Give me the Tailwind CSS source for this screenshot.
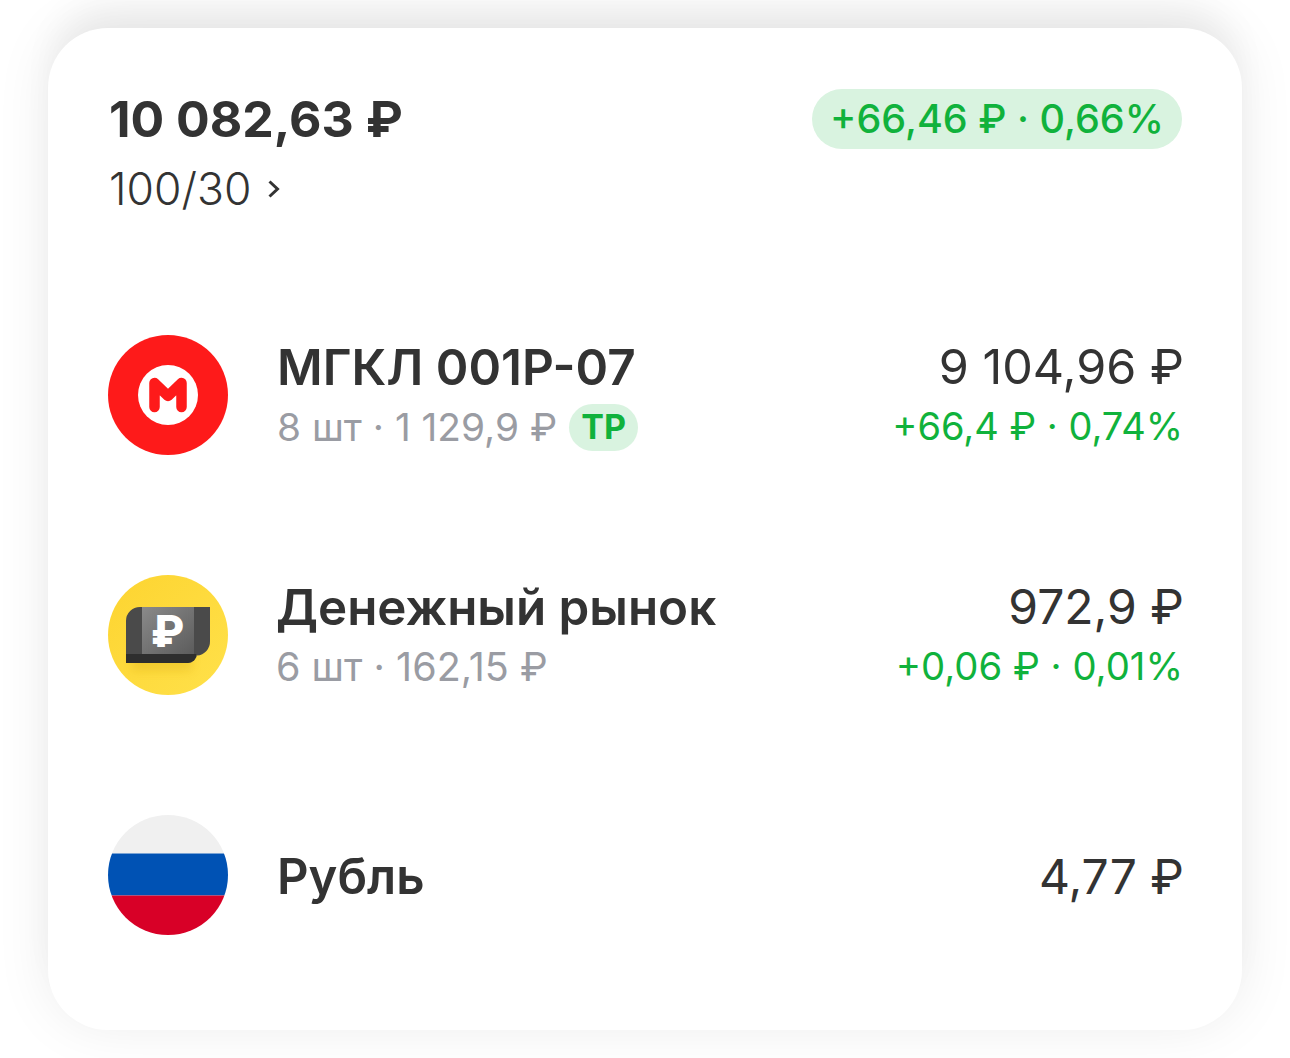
<!DOCTYPE html>
<html lang="ru">
<head>
<meta charset="utf-8">
<title>Портфель</title>
<script src="https://cdn.jsdelivr.net/npm/@tailwindcss/browser@4"></script>
</head>
<body class="h-[1058px] w-[1290px] overflow-hidden bg-white font-['Inter','Liberation_Sans',sans-serif] text-[#333333]">
  <main class="ml-[48px] mt-[28px] h-[1002px] w-[1194px] rounded-[60px] bg-white px-[60px] pt-[61px] shadow-[0_-4px_56px_rgba(0,0,0,0.08),0_-30px_36px_-8px_rgba(0,0,0,0.05)]">
    <!-- Header -->
    <header class="flex items-start justify-between">
      <div>
        <div class="ml-[1px] h-[60px] text-[50px] leading-[60px] font-bold">10 082,63 ₽</div>
        <div class="ml-[1px] mt-[10px] flex h-[60px] items-center gap-[16px] text-[44.500px] leading-[60px] font-light">
          100/30
          <svg class="h-[20px] w-[14px]" viewBox="0 0 14 20" fill="none" stroke="#333333" stroke-width="3"><path d="M2.500 2.500 10.500 10l-8 7.500"/></svg>
        </div>
      </div>
      <div class="flex h-[60px] w-[370px] items-center justify-center rounded-full bg-[#d9f3e0] pt-[2px] text-[39.500px] font-medium text-[#10b23c]">+66,46 ₽ · 0,66%</div>
    </header>

    <!-- Rows -->
    <section class="mt-[116px] flex flex-col gap-[120px]">
      <div class="flex h-[120px] items-center">
        <svg class="h-[120px] w-[120px] shrink-0" viewBox="0 0 120 120">
          <circle cx="60" cy="60" r="60" fill="#fe1a1a"/>
          <circle cx="60" cy="60" r="30" fill="#fff"/>
          <path d="M46.500 72V48L60 61l13.500-13V72" fill="none" stroke="#fe1a1a" stroke-width="10.500" stroke-linecap="round" stroke-linejoin="round"/>
        </svg>
        <div class="ml-[49px] flex-1 pt-[4px]">
          <div class="h-[60px] text-[49.500px] leading-[60px] font-semibold">МГКЛ 001Р-07</div>
          <div class="flex h-[60px] items-center text-[38.800px] leading-[60px] text-[#9a9ca3]">
            8 шт · 1 129,9 ₽
            <span class="ml-[12px] flex h-[47px] w-[69px] items-center justify-center rounded-full bg-[#d9f3e0] text-[34px] font-bold text-[#10b23c]">ТР</span>
          </div>
        </div>
        <div class="-mr-[2px] pt-[2px] text-right">
          <div class="h-[60px] pt-[1px] text-[48.500px] leading-[60px]">9 104,96 ₽</div>
          <div class="h-[60px] pr-[1px] text-[38px] leading-[60px] text-[#10b23c]">+66,4 ₽ · 0,74%</div>
        </div>
      </div>

      <div class="flex h-[120px] items-center">
        <svg class="h-[120px] w-[120px] shrink-0" viewBox="0 0 120 120">
          <defs>
            <linearGradient id="coin" x1="0" y1="0" x2="1" y2="1">
              <stop offset="0" stop-color="#fdd430"/>
              <stop offset="1" stop-color="#ffe14a"/>
            </linearGradient>
            <linearGradient id="plate" x1="0" y1="0" x2="1" y2="1">
              <stop offset="0" stop-color="#8a8a8a"/>
              <stop offset="1" stop-color="#5c5c5c"/>
            </linearGradient>
            <filter id="soft" x="-20%" y="-20%" width="140%" height="150%"><feGaussianBlur stdDeviation="5"/></filter>
            <clipPath id="coinClip"><circle cx="60" cy="60" r="60"/></clipPath>
          </defs>
          <circle cx="60" cy="60" r="60" fill="url(#coin)"/>
          <path clip-path="url(#coinClip)" d="M24 60h60v36H24z" fill="#d9a80f" opacity=".3" filter="url(#soft)"/>
          <path d="M32 32h70v34a14 14 0 0 1-13 14.500V79a9 9 0 0 1-9 9H18V46a14 14 0 0 1 14-14z" fill="#4a4a4a"/>
          <path d="M18 79h70.600a9 9 0 0 1-9 9H18z" fill="#2e2e2e"/>
          <path d="M34 32h52v47H34z" fill="url(#plate)"/>
          <text x="59.500" y="72" text-anchor="middle" fill="#fff" font-size="44" font-weight="800" font-family="Inter, sans-serif">₽</text>
        </svg>
        <div class="ml-[48px] flex-1 pt-[4px]">
          <div class="h-[60px] text-[49.300px] leading-[60px] font-semibold">Денежный рынок</div>
          <div class="h-[60px] text-[39.500px] leading-[60px] text-[#9a9ca3]">6 шт · 162,15 ₽</div>
        </div>
        <div class="-mr-[2px] pt-[2px] text-right">
          <div class="h-[60px] pt-[1px] text-[48px] leading-[60px]">972,9 ₽</div>
          <div class="h-[60px] pr-[1px] text-[38.300px] leading-[60px] text-[#10b23c]">+0,06 ₽ · 0,01%</div>
        </div>
      </div>

      <div class="flex h-[120px] items-center">
        <svg class="h-[120px] w-[120px] shrink-0" viewBox="0 0 120 120">
          <clipPath id="flagClip"><circle cx="60" cy="60" r="60"/></clipPath>
          <g clip-path="url(#flagClip)">
            <path d="M0 0h120v38.500H0z" fill="#f0f0f0"/>
            <path d="M0 38.500h120v42H0z" fill="#0052b4"/>
            <path d="M0 80.500h120V120H0z" fill="#d80027"/>
          </g>
        </svg>
        <div class="ml-[49px] flex-1 pt-[4px] text-[49px] leading-[60px] font-semibold">Рубль</div>
        <div class="-mr-[2px] pt-[4px] text-[48px] leading-[60px]">4,77 ₽</div>
      </div>
    </section>
  </main>
</body>
</html>
